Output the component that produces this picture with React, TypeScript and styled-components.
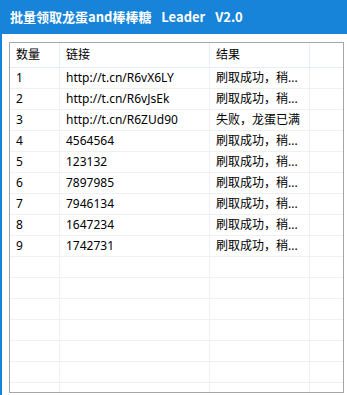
import React from 'react';
import styled, { createGlobalStyle } from 'styled-components';

type Row = {
  no: string;
  link: string;
  result: string;
};

const rows: Row[] = [
  { no: '1', link: 'http://t.cn/R6vX6LY', result: '刷取成功，稍...' },
  { no: '2', link: 'http://t.cn/R6vJsEk', result: '刷取成功，稍...' },
  { no: '3', link: 'http://t.cn/R6ZUd90', result: '失败，龙蛋已满' },
  { no: '4', link: '4564564', result: '刷取成功，稍...' },
  { no: '5', link: '123132', result: '刷取成功，稍...' },
  { no: '6', link: '7897985', result: '刷取成功，稍...' },
  { no: '7', link: '7946134', result: '刷取成功，稍...' },
  { no: '8', link: '1647234', result: '刷取成功，稍...' },
  { no: '9', link: '1742731', result: '刷取成功，稍...' },
];

const EMPTY_ROWS = 7;

const GlobalStyle = createGlobalStyle`
  html, body {
    margin: 0;
    padding: 0;
    background: #ffffff;
  }
  body {
    font-family: "Noto Sans", "Noto Sans CJK SC", sans-serif;
  }
`;

export default function App() {
  return (
    <>
      <GlobalStyle />
      <Window>
        <TitleBar>批量领取龙蛋and棒棒糖  Leader  V2.0</TitleBar>
        <Body>
          <ListView>
            <Header>
              <HeadCell $w={50}>数量</HeadCell>
              <HeadCell $w={150}>链接</HeadCell>
              <HeadCell $w={100}>结果</HeadCell>
              <HeadCell $w={32} />
            </Header>
            {rows.map((r) => (
              <DataRow key={r.no}>
                <Cell $w={50}>{r.no}</Cell>
                <Cell $w={150}>{r.link}</Cell>
                <Cell $w={100}>{r.result}</Cell>
                <Cell $w={32} />
              </DataRow>
            ))}
            {Array.from({ length: EMPTY_ROWS }).map((_, i) => (
              <DataRow key={'e' + i}>
                <Cell $w={50} />
                <Cell $w={150} />
                <Cell $w={100} />
                <Cell $w={32} />
              </DataRow>
            ))}
          </ListView>
        </Body>
      </Window>
    </>
  );
}

const Window = styled.div`
  width: 347px;
  height: 395px;
  box-sizing: border-box;
  border-left: 2px solid #1784d9;
  display: flex;
  flex-direction: column;
  overflow: hidden;
`;

const TitleBar = styled.div`
  height: 34px;
  margin-left: -2px;
  padding-left: 10px;
  background: #1784d9;
  color: #ffffff;
  font-family: "Noto Sans CJK SC", sans-serif;
  font-weight: bold;
  font-size: 13px;
  line-height: 34px;
  word-spacing: 2px;
  white-space: pre;
  flex-shrink: 0;
`;

const Body = styled.div`
  flex: 1;
  padding: 8px 3px 2px 7px;
  display: flex;
  min-height: 0;
`;

const ListView = styled.div`
  flex: 1;
  border: 1px solid #a6a6a6;
  overflow: hidden;
  font-size: 12px;
  color: #000000;
`;

const Header = styled.div`
  display: flex;
  height: 24px;
  border-bottom: 1px solid #e5edf7;
`;

const HeadCell = styled.div<{ $w: number }>`
  width: ${(p) => p.$w}px;
  flex-shrink: 0;
  box-sizing: border-box;
  border-right: 1px solid #e5edf7;
  padding-left: 6px;
  line-height: 24px;
  &:last-child {
    flex: 1;
    border-right: none;
  }
`;

const DataRow = styled.div`
  display: flex;
  height: 20px;
  border-bottom: 1px solid #f0f0f0;
`;

const Cell = styled.div<{ $w: number }>`
  width: ${(p) => p.$w}px;
  flex-shrink: 0;
  box-sizing: border-box;
  border-right: 1px solid #f0f0f0;
  padding: 0 4px 0 6px;
  line-height: 20px;
  white-space: nowrap;
  overflow: hidden;
  &:last-child {
    flex: 1;
    border-right: none;
  }
`;
